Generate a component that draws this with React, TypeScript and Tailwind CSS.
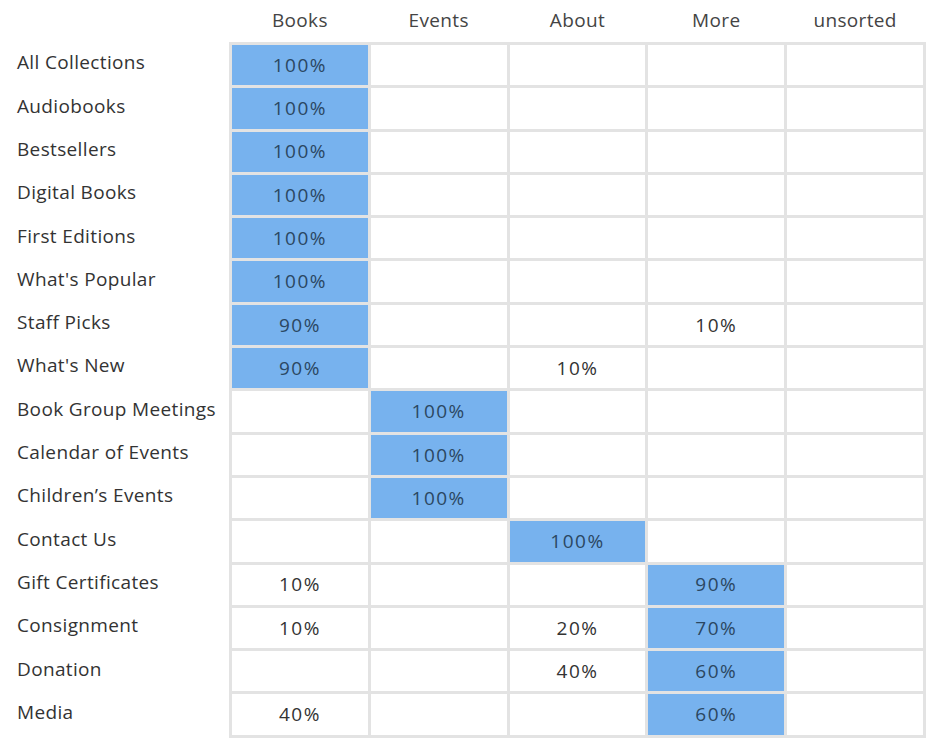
import React from "react";

const cols = ["Books", "Events", "About", "More", "unsorted"];

const rows: [string, (number | null)[]][] = [
  ["All Collections", [100, null, null, null, null]],
  ["Audiobooks", [100, null, null, null, null]],
  ["Bestsellers", [100, null, null, null, null]],
  ["Digital Books", [100, null, null, null, null]],
  ["First Editions", [100, null, null, null, null]],
  ["What's Popular", [100, null, null, null, null]],
  ["Staff Picks", [90, null, null, 10, null]],
  ["What's New", [90, null, 10, null, null]],
  ["Book Group Meetings", [null, 100, null, null, null]],
  ["Calendar of Events", [null, 100, null, null, null]],
  ["Children\u2019s Events", [null, 100, null, null, null]],
  ["Contact Us", [null, null, 100, null, null]],
  ["Gift Certificates", [10, null, null, 90, null]],
  ["Consignment", [10, null, 20, 70, null]],
  ["Donation", [null, null, 40, 60, null]],
  ["Media", [40, null, null, 60, null]],
];

export default function App() {
  return (
    <div
      className="w-[940px] h-[752px] bg-white text-[19px] tracking-[0.35px]"
      style={{ fontFamily: "'Open Sans', Lato, sans-serif" }}
    >
      <div className="flex">
        <div className="w-[229px] shrink-0 flex flex-col pt-[42px]">
          {rows.map(([label]) => (
            <div
              key={label}
              className="h-[43.3px] flex items-center pl-[17px] text-[#333] pb-[2px] whitespace-nowrap"
            >
              {label}
            </div>
          ))}
        </div>
        <div className="w-[697px] shrink-0 flex flex-col">
          <div className="h-[42px] grid grid-cols-5 px-[3px] gap-[3px] items-center pb-[1px]">
            {cols.map((c) => (
              <div key={c} className="text-center text-[#444]">
                {c}
              </div>
            ))}
          </div>
          <div className="grid grid-cols-5 gap-[3px] p-[3px] bg-[#e3e3e3]">
            {rows.map(([label, vals]) =>
              vals.map((v, i) => {
                const big = v !== null && v >= 60;
                return (
                  <div
                    key={label + i}
                    className={
                      "h-[40.3px] flex items-center justify-center tracking-[1.5px] " +
                      (big ? "bg-[#77b2ee] text-[#2b4762]" : "bg-white text-[#333]")
                    }
                  >
                    {v !== null ? `${v}%` : ""}
                  </div>
                );
              })
            )}
          </div>
        </div>
      </div>
    </div>
  );
}
